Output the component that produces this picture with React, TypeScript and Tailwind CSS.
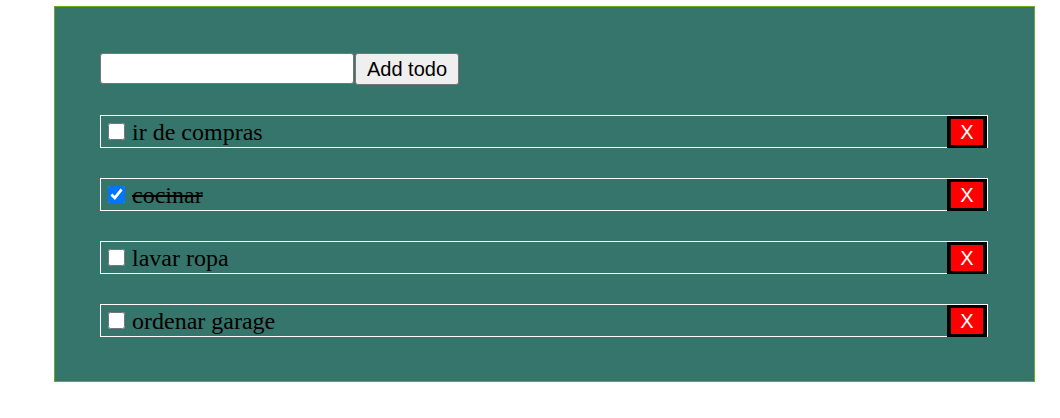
import { useState } from "react";

type Todo = { id: number; text: string; done: boolean };

const initialTodos: Todo[] = [
  { id: 1, text: "ir de compras", done: false },
  { id: 2, text: "cocinar", done: true },
  { id: 3, text: "lavar ropa", done: false },
  { id: 4, text: "ordenar garage", done: false },
];

export default function App() {
  const [todos, setTodos] = useState<Todo[]>(initialTodos);
  const [text, setText] = useState("");

  const addTodo = () => {
    if (!text.trim()) return;
    setTodos([...todos, { id: Date.now(), text, done: false }]);
    setText("");
  };

  const toggle = (id: number) =>
    setTodos(todos.map((t) => (t.id === id ? { ...t, done: !t.done } : t)));

  const remove = (id: number) => setTodos(todos.filter((t) => t.id !== id));

  return (
    <div className="bg-white min-h-[418px] pt-[6px] pl-[54px]">
      <div className="w-[981px] h-[376px] bg-[#35756b] border border-[#6bab1f] pl-[45px] pr-[46px] pt-[46px]">
        {/* formulario */}
        <div className="flex items-start gap-[1px]">
          <input
            type="text"
            value={text}
            onChange={(e) => setText(e.target.value)}
            className="w-[254px] h-[31px] bg-white border border-[#767676] rounded-[3px] px-1 text-[16px] outline-none"
          />
          <button
            onClick={addTodo}
            className="w-[104px] h-[32px] bg-[#efefef] border border-[#767676] rounded-[3px] text-[20px] text-black font-['Liberation_Sans',Arial,sans-serif]"
          >
            Add todo
          </button>
        </div>

        {/* lista */}
        <ul className="mt-[30px] flex flex-col gap-[30px]">
          {todos.map((todo) => (
            <li
              key={todo.id}
              className="h-[33px] border border-white flex items-center pl-[7px]"
            >
              <input
                type="checkbox"
                checked={todo.done}
                onChange={() => toggle(todo.id)}
                className="w-[17px] h-[17px] m-0 mr-[7px] shrink-0"
              />
              <span
                className={`flex-1 text-[24px] text-black font-['Liberation_Serif','Times_New_Roman',serif] ${
                  todo.done ? "line-through" : ""
                }`}
              >
                {todo.text}
              </span>
              <button
                onClick={() => remove(todo.id)}
                className="self-start w-[40px] h-[32px] shrink-0 bg-[#ff0000] border-x-4 border-y-[3px] border-black text-white text-[20px] leading-none font-['Liberation_Sans',Arial,sans-serif] flex items-center justify-center"
              >
                X
              </button>
            </li>
          ))}
        </ul>
      </div>
    </div>
  );
}
